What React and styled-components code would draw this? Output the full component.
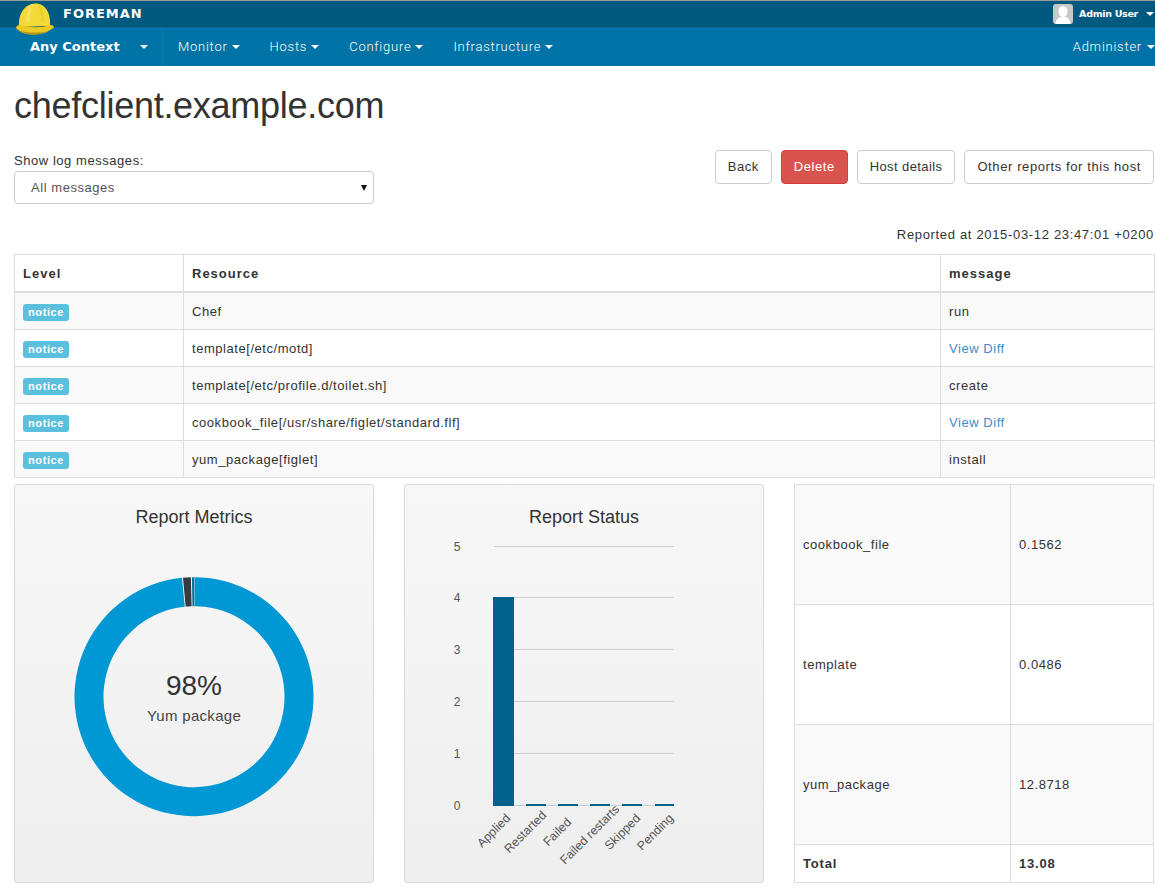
import React from 'react';
import styled, { createGlobalStyle } from 'styled-components';

const GlobalStyle = createGlobalStyle`
  html, body {
    margin: 0;
    background: #fff;
    color: #333;
    font-family: 'Liberation Sans', Arial, sans-serif;
    font-size: 13px;
    line-height: 20px;
    letter-spacing: 0.55px;
  }
  * { box-sizing: border-box; }
`;

const Header = styled.header`
  position: relative;
  color: #fff;
`;

const TopBar = styled.div`
  display: flex;
  align-items: center;
  height: 27px;
  padding: 0 1px 0 63px;
  background: #005a7f;
  border-top: 1px solid #9a9a9a;
  border-bottom: 1px solid #004c6c;
`;

const Brand = styled.span`
  font-family: 'DejaVu Sans', sans-serif;
  font-size: 13px;
  font-weight: 700;
  letter-spacing: 1px;
`;

const UserMenu = styled.div`
  display: flex;
  align-items: center;
  margin-left: auto;
  font-family: 'DejaVu Sans', sans-serif;
  font-size: 9.5px;
  font-weight: 700;
  letter-spacing: -0.3px;
`;

const Avatar = styled.svg`
  display: block;
  width: 20px;
  height: 20px;
  margin-right: 6px;
`;

const NavBar = styled.nav`
  display: flex;
  align-items: stretch;
  height: 39px;
  background: #0073a6;
  font-family: Roboto, sans-serif;
  font-size: 13px;
  font-weight: 300;
  letter-spacing: 0.75px;
`;

const ContextMenu = styled.div`
  display: flex;
  align-items: center;
  width: 163px;
  padding-left: 30px;
  border-right: 1px solid #0081b8;
  font-family: 'DejaVu Sans', sans-serif;
  font-size: 13px;
  font-weight: 700;
  letter-spacing: 0;
`;

const NavItem = styled.div`
  display: flex;
  align-items: center;
  padding: 0 15px;
  ${(p) => p.$right && 'margin-left: auto; padding: 0 0 0 15px;'}
`;

const Caret = styled.i`
  display: inline-block;
  width: 0;
  height: 0;
  margin-left: ${(p) => p.$gap || 4}px;
  border-top: 4px solid #fff;
  border-left: 4px solid transparent;
  border-right: 4px solid transparent;
`;

const Helmet = styled.svg`
  position: absolute;
  left: 15px;
  top: 2px;
  width: 39px;
  height: 33px;
`;

const Page = styled.main`
  width: 1155px;
  padding: 0 1px 0 14px;
`;

const Title = styled.h1`
  margin: 20px 0 24px;
  font-size: 36px;
  font-weight: 400;
  line-height: 40px;
  letter-spacing: -0.27px;
`;

const Controls = styled.div`
  display: flex;
  justify-content: space-between;
  align-items: flex-start;
`;

const FilterLabel = styled.label`
  display: block;
  height: 21px;
  padding-top: 1px;
`;

const SelectWrap = styled.div`
  position: relative;
  width: 360px;

  &::after {
    content: '';
    position: absolute;
    right: 7px;
    top: 14px;
    border-top: 6px solid #111;
    border-left: 3px solid transparent;
    border-right: 3px solid transparent;
  }
`;

const Select = styled.select`
  display: block;
  width: 100%;
  height: 33px;
  padding: 0 16px;
  appearance: none;
  background: #fff;
  border: 1px solid #ccc;
  border-radius: 4px;
  color: #555;
  font: inherit;
  letter-spacing: inherit;
`;

const Buttons = styled.div`
  display: flex;
  gap: 9px;
`;

const Button = styled.button`
  height: 34px;
  padding: 0 12px;
  background: ${(p) => (p.$danger ? '#d9534f' : '#fff')};
  border: 1px solid ${(p) => (p.$danger ? '#d43f3a' : '#ccc')};
  border-radius: 4px;
  color: ${(p) => (p.$danger ? '#fff' : '#333')};
  font: inherit;
  letter-spacing: ${(p) => p.$spacing || 0.55}px;
`;

const ReportedAt = styled.p`
  margin: 20px 0 10px;
  padding-top: 1px;
  height: 20px;
  letter-spacing: 0.67px;
  text-align: right;
`;

const Table = styled.table`
  width: 100%;
  border-collapse: collapse;
  table-layout: fixed;
  border: 1px solid #ddd;
`;

const Th = styled.th`
  padding: 9px 8px 7px;
  border: 1px solid #ddd;
  border-bottom-width: 2px;
  font-weight: 700;
  letter-spacing: 1px;
  text-align: left;
  width: ${(p) => p.$width}px;
`;

const Row = styled.tr`
  background: ${(p) => (p.$striped ? '#f9f9f9' : '#fff')};
`;

const Td = styled.td`
  padding: ${(p) => (p.$low ? '9px 8px 7px' : '8px')};
  border: 1px solid #ddd;
  vertical-align: middle;
  width: ${(p) => p.$width}px;
  height: ${(p) => p.$height}px;
  font-weight: ${(p) => (p.$bold ? 700 : 400)};
  letter-spacing: ${(p) => (p.$bold ? '0.8px' : 'inherit')};
`;

const Badge = styled.span`
  display: inline-block;
  height: 17px;
  padding: 0 5px;
  background: #5bc0de;
  border-radius: 3px;
  color: #fff;
  font-size: 11px;
  font-weight: 700;
  letter-spacing: 0.6px;
  line-height: 17px;
  vertical-align: middle;
`;

const Link = styled.a`
  color: #428bca;
  text-decoration: none;
`;

const Widgets = styled.section`
  display: grid;
  grid-template-columns: repeat(3, 360px);
  gap: 30px;
  margin-top: 6px;
`;

const Panel = styled.div`
  height: 399px;
  background: linear-gradient(#f8f8f8, #eee);
  border: 1px solid #d8d8d8;
  border-radius: 3px;
`;

const PanelTitle = styled.h4`
  height: 50px;
  margin: 0;
  padding-top: 22px;
  font-size: 18px;
  font-weight: 400;
  letter-spacing: 0;
  line-height: 20px;
  text-align: center;
`;

const Chart = styled.svg`
  display: block;
  width: 358px;
  height: 347px;
  letter-spacing: 0;
`;

const DonutValue = styled.text`
  fill: #333;
  font-size: 28px;
  text-anchor: middle;
`;

const DonutLabel = styled.text`
  fill: #444;
  font-size: 15px;
  letter-spacing: 0.3px;
  text-anchor: middle;
`;

const AxisText = styled.text`
  fill: #555;
  font-size: ${(p) => p.$size || 12}px;
`;

const logRows = [
  ['Chef', 'run'],
  ['template[/etc/motd]', null],
  ['template[/etc/profile.d/toilet.sh]', 'create'],
  ['cookbook_file[/usr/share/figlet/standard.flf]', null],
  ['yum_package[figlet]', 'install'],
];

const metrics = [
  ['cookbook_file', '0.1562'],
  ['template', '0.0486'],
  ['yum_package', '12.8718'],
];

const navItems = ['Monitor', 'Hosts', 'Configure', 'Infrastructure'];

// bars and tick labels, local to the chart svg (which starts at 405,535)
const barSlots = [
  { x: 88, w: 21, h: 209 },
  { x: 121, w: 20, h: 2 },
  { x: 153, w: 20, h: 2 },
  { x: 185, w: 20, h: 2 },
  { x: 217, w: 20, h: 2 },
  { x: 250, w: 19, h: 2 },
];
const xLabels = [
  ['Applied', 106, 284],
  ['Restarted', 142, 281],
  ['Failed', 167, 288],
  ['Failed restarts', 215, 275],
  ['Skipped', 236, 284],
  ['Pending', 269, 284],
];
const gridY = [270, 218, 166, 114, 62, 11];

const polar = (r, deg) => {
  const a = (deg * Math.PI) / 180;
  return [179 + r * Math.sin(a), 161.7 - r * Math.cos(a)];
};

const arcPath = (from, to, outer = 119.5, inner = 90.5) => {
  const large = to - from > 180 ? 1 : 0;
  const [x1, y1] = polar(outer, from);
  const [x2, y2] = polar(outer, to);
  const [x3, y3] = polar(inner, to);
  const [x4, y4] = polar(inner, from);
  return `M${x1} ${y1}A${outer} ${outer} 0 ${large} 1 ${x2} ${y2}L${x3} ${y3}A${inner} ${inner} 0 ${large} 0 ${x4} ${y4}Z`;
};

const HelmetLogo = () => (
  <Helmet viewBox="0 0 39 33">
    <path d="M4 25C3 11 10 2 20 1.500 30 1 36 11 35 24Z" fill="#f3d935" />
    <path d="M15 3C12 8 11 13 11 20L15 20C15 13 16 8 19 3Z" fill="#f6e25c" />
    <path d="M23 2.500C25 8 26 13 26 19L29 20C29 13 28 7 25 3Z" fill="#ebcf2e" />
    <path d="M1 26C1 24 3 23 5 23 14 26 27 26 35 23 37 22.500 39 24 39 25.500 34 29 30 32 20 32.500 11 33 4 30 1 26Z" fill="#ecca22" />
    <path d="M3 28C9 32 14 33 20 32.500 29 32 33 29 38 26.500 33 30 28 30.500 20 30.500 13 30.500 8 30 3 28Z" fill="#b3951a" />
  </Helmet>
);

const AvatarIcon = () => (
  <Avatar viewBox="0 0 20 20">
    <rect width="20" height="20" rx="3" fill="#c9c9c9" />
    <ellipse cx="10" cy="7.500" rx="4.500" ry="5.500" fill="#fff" />
    <path d="M2.500 20C3 14.500 6 13 10 13S17 14.500 17.500 20Z" fill="#fff" />
  </Avatar>
);

const MetricsDonut = () => (
  <Chart viewBox="0 0 358 347">
    <path d={arcPath(0.4, 354.2)} fill="#0098d4" />
    <path d={arcPath(354.7, 358.5)} fill="#363b42" />
    <path d={arcPath(359, 360.2)} fill="#0073a6" />
    <DonutValue x="179" y="160">98%</DonutValue>
    <DonutLabel x="179" y="186">Yum package</DonutLabel>
  </Chart>
);

const StatusBars = () => (
  <Chart viewBox="0 0 358 347">
    {gridY.map((y, i) => (
      <React.Fragment key={y}>
        <rect x="89" y={y} width="180" height="1" fill="#cfcfcf" />
        <AxisText x="52" y={y + 5} textAnchor="middle">{i}</AxisText>
      </React.Fragment>
    ))}
    {barSlots.map((b) => (
      <rect key={b.x} x={b.x} y={271 - b.h} width={b.w} height={b.h} fill="#00618a" />
    ))}
    {xLabels.map(([text, x, y]) => (
      <AxisText key={text} $size={12.3} x={x} y={y} textAnchor="end" transform={`rotate(-45 ${x} ${y})`}>
        {text}
      </AxisText>
    ))}
  </Chart>
);

export default function App() {
  return (
    <>
      <GlobalStyle />
      <Header>
        <TopBar>
          <Brand>FOREMAN</Brand>
          <UserMenu>
            <AvatarIcon />
            Admin User
            <Caret $gap={8} />
          </UserMenu>
        </TopBar>
        <NavBar>
          <ContextMenu>
            Any Context
            <Caret $gap={20} />
          </ContextMenu>
          {navItems.map((item) => (
            <NavItem key={item}>
              {item}
              <Caret />
            </NavItem>
          ))}
          <NavItem $right>
            Administer
            <Caret $gap={5} />
          </NavItem>
        </NavBar>
        <HelmetLogo />
      </Header>
      <Page>
        <Title>chefclient.example.com</Title>
        <Controls>
          <div>
            <FilterLabel>Show log messages:</FilterLabel>
            <SelectWrap>
              <Select defaultValue="all">
                <option value="all">All messages</option>
              </Select>
            </SelectWrap>
          </div>
          <Buttons>
            <Button>Back</Button>
            <Button $danger>Delete</Button>
            <Button $spacing={0.4}>Host details</Button>
            <Button $spacing={0.6}>Other reports for this host</Button>
          </Buttons>
        </Controls>
        <ReportedAt>Reported at 2015-03-12 23:47:01 +0200</ReportedAt>
        <Table>
          <thead>
            <tr>
              <Th $width={169}>Level</Th>
              <Th $width={757}>Resource</Th>
              <Th $width={214}>message</Th>
            </tr>
          </thead>
          <tbody>
            {logRows.map(([resource, message], i) => (
              <Row key={resource} $striped={i % 2 === 0}>
                <Td $low><Badge>notice</Badge></Td>
                <Td $low>{resource}</Td>
                <Td $low>{message || <Link href="#diff">View Diff</Link>}</Td>
              </Row>
            ))}
          </tbody>
        </Table>
        <Widgets>
          <Panel>
            <PanelTitle>Report Metrics</PanelTitle>
            <MetricsDonut />
          </Panel>
          <Panel>
            <PanelTitle>Report Status</PanelTitle>
            <StatusBars />
          </Panel>
          <Table>
            <tbody>
              {metrics.map(([name, value], i) => (
                <Row key={name} $striped={i % 2 === 0}>
                  <Td $width={216} $height={120}>{name}</Td>
                  <Td $height={120}>{value}</Td>
                </Row>
              ))}
              <Row>
                <Td $width={216} $height={38} $bold>Total</Td>
                <Td $height={38} $bold>13.08</Td>
              </Row>
            </tbody>
          </Table>
        </Widgets>
      </Page>
    </>
  );
}
